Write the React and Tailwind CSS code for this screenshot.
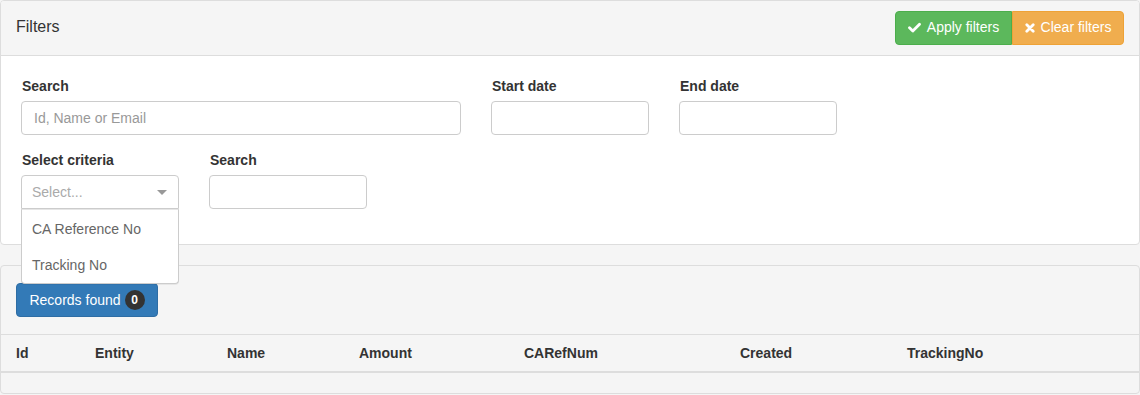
import { useState } from 'react';

const columns = [
  { label: 'Id', w: 'w-[79px]' },
  { label: 'Entity', w: 'w-[132px]' },
  { label: 'Name', w: 'w-[132px]' },
  { label: 'Amount', w: 'w-[165px]' },
  { label: 'CARefNum', w: 'w-[216px]' },
  { label: 'Created', w: 'w-[167px]' },
  { label: 'TrackingNo', w: 'flex-1' },
];

const CheckIcon = () => (
  <svg width="13" height="11" viewBox="0 0 13 11" className="mr-[6px]">
    <path d="M1.5 5.8 L4.8 9 L11.5 2.2" fill="none" stroke="white" strokeWidth="2.8" strokeLinecap="round" strokeLinejoin="round" />
  </svg>
);

const TimesIcon = () => (
  <svg width="10" height="10" viewBox="0 0 10 10" className="mr-[6px]">
    <path d="M1.8 1.8 L8.2 8.2 M8.2 1.8 L1.8 8.2" fill="none" stroke="white" strokeWidth="2.8" strokeLinecap="round" />
  </svg>
);

const Field = ({ label, width, children }) => (
  <div className={`${width} mb-[15px]`}>
    <label className="block text-[14px] leading-[20px] font-bold text-[#333] mb-[5px] pl-px">{label}</label>
    {children}
  </div>
);

const TextInput = ({ placeholder }) => (
  <input
    placeholder={placeholder}
    className="w-full h-[34px] border border-[#ccc] rounded-[4px] px-[12px] text-[14px] text-[#555] placeholder:text-[#999] outline-none"
  />
);

const App = () => {
  const [open] = useState(true);

  return (
    <div className="w-[1140px] h-[395px] bg-[#f5f5f5] font-['Liberation_Sans',Arial,sans-serif] text-[#333] overflow-hidden">
      {/* Filters panel */}
      <div className="h-[245px] bg-white border border-[#ddd] rounded-[4px]">
        <div className="h-[55px] bg-[#f5f5f5] border-b border-[#ddd] rounded-t-[3px] flex items-center justify-between pl-[15px] pr-[15px]">
          <h3 className="text-[16px] text-[#333] -mt-[3px]">Filters</h3>
          <div className="flex -mt-[1px]">
            <button className="h-[34px] w-[117px] flex items-center justify-center bg-[#5cb85c] border border-[#4cae4c] text-white text-[14px] rounded-l-[4px]">
              <CheckIcon />
              Apply filters
            </button>
            <button className="h-[34px] w-[112px] flex items-center justify-center bg-[#f0ad4e] border border-[#eea236] text-white text-[14px] rounded-r-[4px]">
              <TimesIcon />
              Clear filters
            </button>
          </div>
        </div>

        <div className="pt-[20px] px-[20px]">
          <div className="flex gap-[30px]">
            <Field label="Search" width="w-[440px]">
              <TextInput placeholder="Id, Name or Email" />
            </Field>
            <Field label="Start date" width="w-[158px]">
              <TextInput />
            </Field>
            <Field label="End date" width="w-[158px]">
              <TextInput />
            </Field>
          </div>
          <div className="flex gap-[30px]">
            <Field label="Select criteria" width="w-[158px]">
              <div className="relative">
                <div className={`h-[34px] border border-[#ccc] bg-white flex items-center justify-between pl-[10px] pr-[10px] ${open ? 'rounded-t-[4px]' : 'rounded-[4px]'}`}>
                  <span className="text-[14px] text-[#aaa]">Select...</span>
                  <span className="w-0 h-0 border-l-[5px] border-r-[5px] border-t-[5px] border-l-transparent border-r-transparent border-t-[#999] mr-[1px]"></span>
                </div>
                {open && (
                  <div className="absolute left-0 right-0 top-[34px] z-10 bg-white border border-[#ccc] border-t-[#e6e6e6] rounded-b-[4px] pt-px shadow-[0_1px_0_rgba(0,0,0,0.06)]">
                    {['CA Reference No', 'Tracking No'].map((o) => (
                      <div key={o} className="h-[36px] flex items-center px-[10px] text-[14px] text-[#666]">
                        {o}
                      </div>
                    ))}
                  </div>
                )}
              </div>
            </Field>
            <Field label="Search" width="w-[158px]">
              <TextInput />
            </Field>
          </div>
        </div>
      </div>

      {/* Results panel */}
      <div className="mt-[20px] h-[129px] bg-[#f5f5f5] border border-[#ddd] rounded-[4px]">
        <div className="pt-[17px] pl-[15px] pb-[17px]">
          <button className="h-[34px] w-[142px] flex items-center justify-center gap-[4px] bg-[#337ab7] border border-[#2e6da4] rounded-[4px] text-white text-[14px]">
            Records found
            <span className="min-w-[20px] h-[20px] rounded-full bg-[#333] text-white text-[12px] font-bold flex items-center justify-center">0</span>
          </button>
        </div>
        <div className="border-t border-[#ddd]">
          <div className="h-[38px] flex items-center border-b-2 border-[#ddd] pl-[15px]">
            {columns.map((c) => (
              <div key={c.label} className={`${c.w} text-[14px] font-bold text-[#333]`}>
                {c.label}
              </div>
            ))}
          </div>
        </div>
      </div>
    </div>
  );
};

export default App;
